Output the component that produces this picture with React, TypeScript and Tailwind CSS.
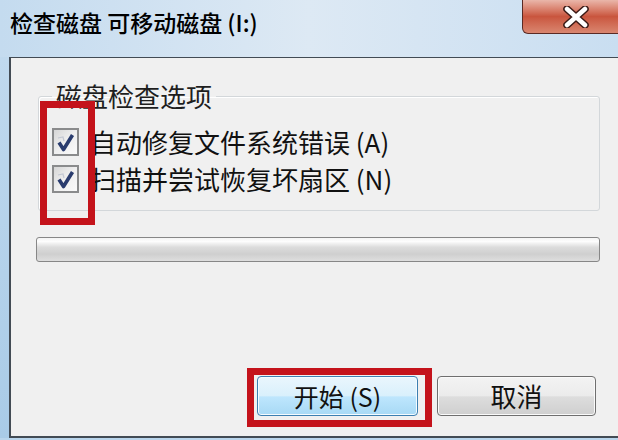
import React from "react";

const font = { fontFamily: '"Noto Sans CJK SC", "Noto Sans", sans-serif' };

// Win7-style checked checkbox
function CheckBox() {
  return (
    <span className="flex h-[28px] w-[27px] shrink-0 items-center justify-center border-2 border-[#8a8b8c] bg-gradient-to-br from-[#d6d6d6] via-[#efefef] to-[#fafafa]">
      <svg width="21" height="21" viewBox="0 0 21 21">
        <path d="M3 6 L8 5 L9 9" fill="none" stroke="#c3c7d2" strokeWidth="1.2" />
        <path d="M4 10.5 L8.5 17.5 L17.5 3" fill="none" stroke="#2a3c6e" strokeWidth="3.6" strokeLinejoin="round" />
      </svg>
    </span>
  );
}

function CloseButton() {
  return (
    <div className="-mr-[14px] flex h-[34px] w-[110px] shrink-0 items-center justify-center rounded-bl-[6px] border border-t-0 border-[#5a2a24] bg-gradient-to-b from-[#e9b6aa] via-[#c9553e] to-[#d98670]">
      <svg width="30" height="22" viewBox="0 0 30 22" className="-ml-[2px]">
        <path d="M6 3 L24 19 M24 3 L6 19" stroke="#3b1a16" strokeWidth="7.5" strokeLinecap="round" />
        <path d="M6 3 L24 19 M24 3 L6 19" stroke="#ffffff" strokeWidth="4.5" strokeLinecap="round" />
      </svg>
    </div>
  );
}

export default function App() {
  return (
    <div className="relative h-[440px] w-[618px] overflow-hidden bg-[#b9d5ec]" style={font}>
      {/* title bar */}
      <div className="flex h-[57px] items-start bg-gradient-to-r from-[#c4dbef] via-[#dde9f4] to-[#c9def1]">
        <div className="flex-1 pl-[10px] pt-[8px] text-[23px] font-medium leading-[28px] text-black">
          检查磁盘 可移动磁盘 (I:)
        </div>
        <CloseButton />
      </div>

      {/* body */}
      <div className="flex h-[381px]">
        <div className="w-[9px] shrink-0 bg-gradient-to-b from-[#c0d9ee] to-[#a9cbe7]" />
        <div className="flex flex-1 flex-col border-b-2 border-l-2 border-t border-[#424b54] bg-[#f0f0f0]">
          <fieldset className="ml-[27px] mt-[25px] h-[128px] w-[562px] rounded-[3px] border border-[#d3d7da] px-[13px] shadow-[inset_1px_1px_0_#ffffff]">
            <legend className="px-[4px] text-[26px] leading-[26px] text-[#1e1e1e]">磁盘检查选项</legend>
            <div className="mt-[19px] flex h-[28px] items-center gap-[11px]">
              <CheckBox />
              <span className="text-[26px] leading-[28px] text-[#111]">自动修复文件系统错误 (A)</span>
            </div>
            <div className="mt-[9px] flex h-[28px] items-center gap-[11px]">
              <CheckBox />
              <span className="text-[26px] leading-[28px] text-[#111]">扫描并尝试恢复坏扇区 (N)</span>
            </div>
          </fieldset>

          {/* progress bar */}
          <div className="ml-[25px] mt-[26px] h-[25px] w-[564px] rounded-[3px] border border-[#878787] bg-[linear-gradient(to_bottom,#f4f4f4_0%,#fdfdfd_15%,#dcdcdc_40%,#cfcfcf_70%,#dedede_100%)]" />

          {/* buttons */}
          <div className="mt-[114px] flex gap-[19px] pl-[246px]">
            <button className="flex h-[40px] w-[161px] items-center justify-center rounded-[4px] border border-[#3c7fb1] bg-[linear-gradient(to_bottom,#eaf6fd_0%,#d9f0fc_50%,#bee6fd_52%,#a7d9f5_100%)] text-[25px] leading-[30px] text-[#111] shadow-[inset_0_0_0_1px_#f4fbff]">
              开始 (S)
            </button>
            <button className="flex h-[40px] w-[159px] items-center justify-center rounded-[4px] border border-[#6f6f6f] bg-[linear-gradient(to_bottom,#f3f3f3_0%,#ebebeb_50%,#dddddd_52%,#cfcfcf_100%)] text-[26px] leading-[30px] text-[#111] shadow-[inset_0_0_0_1px_#fafafa]">
              取消
            </button>
          </div>
        </div>
      </div>

      {/* red annotation frames */}
      <div className="absolute left-[40px] top-[101px] h-[124px] w-[55px] border-[7px] border-[#c4131b]" />
      <div className="absolute left-[247px] top-[368px] h-[59px] w-[185px] border-[7px] border-[#c4131b]" />
    </div>
  );
}
